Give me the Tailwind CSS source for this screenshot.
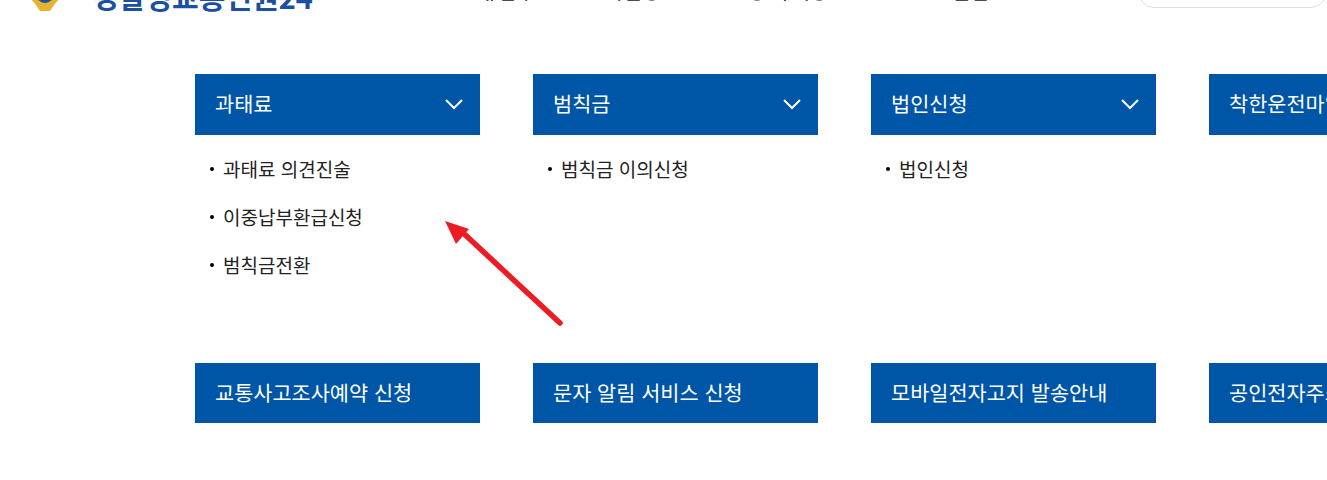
<!DOCTYPE html>
<html lang="ko">

<head>
  <meta charset="UTF-8">
  <title>교통민원24</title>
  <script src="https://cdn.jsdelivr.net/npm/@tailwindcss/browser@4"></script>
</head>

<body class="bg-white overflow-hidden font-['Noto_Sans_CJK_KR','Noto_Sans',sans-serif]">
  <div class="relative h-[480px] w-[1327px] overflow-hidden">
    <!-- header, mostly scrolled out of view -->
    <header class="-mt-[52px] flex h-[60px] items-end">
      <svg class="ml-[30px] -mb-[4px] shrink-0" width="30" height="40" viewBox="0 0 30 40">
        <path d="M3 0H27L29 27L24 33L20 39H10L6 33L1 27Z" fill="#e6b32c"/>
        <circle cx="15" cy="22" r="9" fill="#1d4f9c"/>
        <path d="M6 22a9 9 0 0 1 18 0z" fill="#d33a35"/>
      </svg>
      <div class="ml-[32px] w-[301px] shrink-0 -mb-[8px] text-[29px] leading-[40px] font-semibold text-[#1b4fa0] whitespace-nowrap">경찰청교통민원24</div>
      <nav class="mb-[2px] flex text-[20px] leading-[30px] font-medium text-[#222] whitespace-nowrap">
        <span class="ml-[61px]">조회/납부</span>
        <span class="ml-[51px]">교육일정</span>
        <span class="ml-[87px]">정보/이용</span>
        <span class="ml-[87px]">민원알림</span>
      </nav>
      <div class="ml-auto h-[40px] w-[189px] shrink-0 rounded-[16px] border border-[#dde0ea] bg-white"></div>
    </header>

    <main class="ml-[195px] mt-[66px] w-[1200px]">
      <div class="grid grid-cols-[285px_285px_285px_285px] gap-x-[53px]">
        <section class="h-[229px]">
          <div class="flex h-[61px] items-center justify-between bg-[#0056a6] pb-[2px] pl-[20px] pr-[16px] text-[20.8px] text-white">
            <span>과태료</span>
            <svg width="20" height="12" viewBox="0 0 20 12" fill="none" stroke="white" stroke-width="2"><path d="M2 2l8 8 8-8"/></svg>
          </div>
          <ul class="mt-[11px] text-[19px] text-[#222]">
            <li class="flex h-[48px] items-center pb-[2px]"><span class="ml-[15px] mr-[9px] size-[4px] rounded-full bg-black"></span>과태료 의견진술</li>
            <li class="flex h-[48px] items-center pb-[2px]"><span class="ml-[15px] mr-[9px] size-[4px] rounded-full bg-black"></span>이중납부환급신청</li>
            <li class="flex h-[48px] items-center pb-[2px]"><span class="ml-[15px] mr-[9px] size-[4px] rounded-full bg-black"></span>범칙금전환</li>
          </ul>
        </section>
        <section>
          <div class="flex h-[61px] items-center justify-between bg-[#0056a6] pb-[2px] pl-[20px] pr-[16px] text-[20.8px] text-white">
            <span>범칙금</span>
            <svg width="20" height="12" viewBox="0 0 20 12" fill="none" stroke="white" stroke-width="2"><path d="M2 2l8 8 8-8"/></svg>
          </div>
          <ul class="mt-[11px] text-[19px] text-[#222]">
            <li class="flex h-[48px] items-center pb-[2px]"><span class="ml-[15px] mr-[9px] size-[4px] rounded-full bg-black"></span>범칙금 이의신청</li>
          </ul>
        </section>
        <section>
          <div class="flex h-[61px] items-center justify-between bg-[#0056a6] pb-[2px] pl-[20px] pr-[16px] text-[20.8px] text-white">
            <span>법인신청</span>
            <svg width="20" height="12" viewBox="0 0 20 12" fill="none" stroke="white" stroke-width="2"><path d="M2 2l8 8 8-8"/></svg>
          </div>
          <ul class="mt-[11px] text-[19px] text-[#222]">
            <li class="flex h-[48px] items-center pb-[2px]"><span class="ml-[15px] mr-[9px] size-[4px] rounded-full bg-black"></span>법인신청</li>
          </ul>
        </section>
        <section>
          <div class="flex h-[61px] items-center bg-[#0056a6] pb-[2px] pl-[20px] text-[20.8px] text-white whitespace-nowrap">착한운전마일리지</div>
        </section>
      </div>

      <div class="mt-[60px] grid grid-cols-[285px_285px_285px_285px] gap-x-[53px]">
        <div class="flex h-[60px] items-center bg-[#0056a6] pb-[1px] pl-[20px] text-[20.8px] text-white whitespace-nowrap">교통사고조사예약 신청</div>
        <div class="flex h-[60px] items-center bg-[#0056a6] pb-[1px] pl-[20px] text-[20.8px] text-white whitespace-nowrap">문자 알림 서비스 신청</div>
        <div class="flex h-[60px] items-center bg-[#0056a6] pb-[1px] pl-[20px] text-[20.8px] text-white whitespace-nowrap">모바일전자고지 발송안내</div>
        <div class="flex h-[60px] items-center bg-[#0056a6] pb-[1px] pl-[20px] text-[20.8px] text-white whitespace-nowrap">공인전자주소 신청</div>
      </div>
    </main>

    <!-- red annotation arrow drawn over the page -->
    <svg class="absolute left-[430px] top-[210px]" width="150" height="125" viewBox="0 0 150 125" fill="none">
      <path d="M130 113L30 20" stroke="#ed1c24" stroke-width="5.5" stroke-linecap="round"/>
      <path d="M15 11L39 19L26 34Z" fill="#ed1c24"/>
    </svg>
  </div>
</body>

</html>
